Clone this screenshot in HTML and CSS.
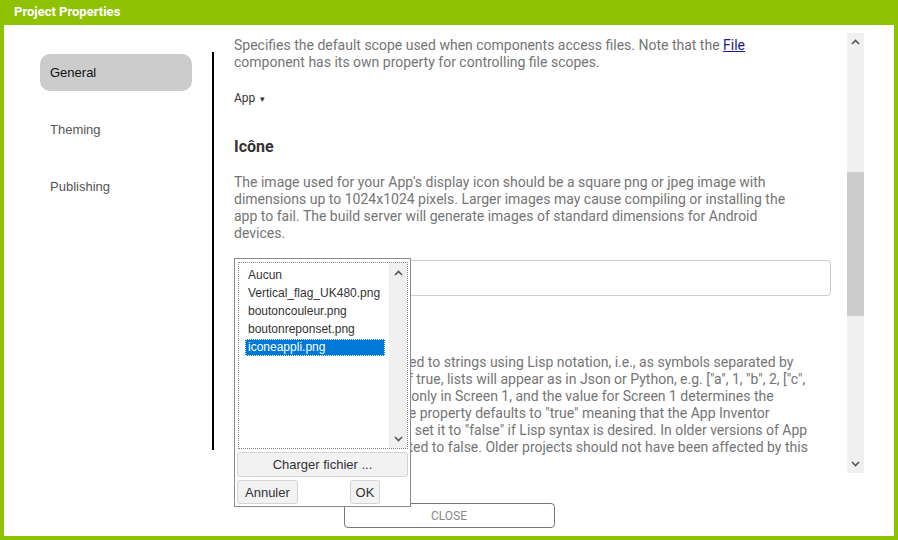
FILE: index.html
```
<!DOCTYPE html>
<html lang="fr">
<head>
  <meta charset="UTF-8">
  <title>Project Properties</title>
  <link rel="stylesheet" href="styles.css">
</head>
<body>

  <div class="dialog">
    <div class="dialog-title">Project Properties</div>

    <div class="dialog-body">
      <div class="main-row">
        <div class="nav">
          <div class="nav-item selected">General</div>
          <div class="nav-item">Theming</div>
          <div class="nav-item">Publishing</div>
        </div>

        <div class="scroll-view">
          <p class="desc first">Specifies the default scope used when components access files. Note that the <a href="#">File</a> component has its own property for controlling file scopes.</p>
          <div class="choice">App <span class="caret">▾</span></div>

          <h3 class="prop-name">Icône</h3>
          <p class="desc">The image used for your App's display icon should be a square png or jpeg image with dimensions up to 1024x1024 pixels. Larger images may cause compiling or installing the app to fail. The build server will generate images of standard dimensions for Android devices.</p>
          <div class="text-box"></div>

          <h3 class="prop-name second">ShowListsAsJson</h3>
          <p class="desc lines">If false,&nbsp;&nbsp; lists will be converted to strings using Lisp notation, i.e., as symbols separated by<br>
spaces, e.g., (a 1 b2 (c d)).&nbsp; If true, lists will appear as in Json or Python, e.g. ["a", 1, "b", 2, ["c",<br>
"d"]].&nbsp;&nbsp; This property appears only in Screen 1, and the value for Screen 1 determines the<br>
behavior for all screens.&nbsp;&nbsp; The property defaults to "true" meaning that the App Inventor<br>
programmer must explicitly&nbsp;&nbsp; set it to "false" if Lisp syntax is desired. In older versions of App<br>
Inventor,&nbsp;&nbsp; this setting defaulted to false. Older projects should not have been affected by this<br>
default settings update.</p>
        </div>

        <div class="scrollbar">
          <svg class="arrow" width="9" height="6" viewBox="0 0 9 6"><path d="M1 5 L4.5 1.5 L8 5" fill="none" stroke="#555" stroke-width="1.6"/></svg>
          <div class="thumb"></div>
          <svg class="arrow bottom" width="9" height="6" viewBox="0 0 9 6"><path d="M1 1 L4.5 4.5 L8 1" fill="none" stroke="#555" stroke-width="1.6"/></svg>
        </div>
      </div>

      <div class="footer">
        <button class="close-btn">CLOSE</button>
      </div>

      <!-- liste d'images ouverte par dessus le champ Icône -->
      <div class="picker">
        <div class="list-box">
          <div class="list-items">
            <div class="list-item">Aucun</div>
            <div class="list-item">Vertical_flag_UK480.png</div>
            <div class="list-item">boutoncouleur.png</div>
            <div class="list-item">boutonreponset.png</div>
            <div class="list-item active">iconeappli.png</div>
          </div>
          <div class="list-scroll">
            <svg width="9" height="6" viewBox="0 0 9 6"><path d="M1 5 L4.5 1.5 L8 5" fill="none" stroke="#555" stroke-width="1.6"/></svg>
            <svg width="9" height="6" viewBox="0 0 9 6"><path d="M1 1 L4.5 4.5 L8 1" fill="none" stroke="#555" stroke-width="1.6"/></svg>
          </div>
        </div>
        <button class="picker-btn upload">Charger fichier ...</button>
        <div class="picker-row">
          <button class="picker-btn cancel">Annuler</button>
          <div class="ok-cell"><button class="picker-btn">OK</button></div>
        </div>
      </div>
    </div>
  </div>

</body>
</html>
```

FILE: styles.css
```
body {
  margin: 0;
  font-family: Roboto, 'Liberation Sans', sans-serif;
}

.dialog {
  width: 898px;
  height: 540px;
  box-sizing: border-box;
  background: #8fc202;
  padding: 0 4px 4px 4px;
  display: flex;
  flex-direction: column;
}

.dialog-title {
  height: 25px;
  line-height: 24px;
  padding-left: 10px;
  color: white;
  font-weight: bold;
  font-size: 13px;
}

.dialog-body {
  position: relative;
  flex: 1;
  background: white;
  display: flex;
  flex-direction: column;
}

.main-row {
  display: flex;
  align-items: flex-start;
  margin-top: 8px;
  height: 440px;
}

/* colonne de gauche */
.nav {
  width: 210px;
  height: 398px;
  margin-top: 19px;
  padding-top: 2px;
  padding-left: 36px;
  box-sizing: border-box;
  border-right: 2px solid #000;
  flex-shrink: 0;
  font-family: 'Liberation Sans', sans-serif;
  font-size: 13px;
}

.nav-item {
  width: 152px;
  height: 37px;
  line-height: 37px;
  padding-left: 10px;
  box-sizing: border-box;
  margin-bottom: 20px;
  color: #555;
  border-radius: 10px;
}

.nav-item.selected {
  background: #cccccc;
  color: #111;
}

.scroll-view {
  width: 625px;
  height: 424px;
  margin-left: 8px;
  padding: 4px 16px 0 12px;
  box-sizing: border-box;
  overflow: hidden;
  flex-shrink: 0;
}

.desc {
  margin: 0;
  width: 568px;
  font-size: 14px;
  line-height: 17px;
  color: #757575;
}

.desc a {
  color: #1a1a8c;
}

.desc.lines {
  white-space: nowrap;
  margin-top: 17px;
}

.choice {
  margin-top: 19px;
  font-size: 12px;
  line-height: 16px;
  color: #333;
}

.caret {
  font-size: 9px;
  margin-left: 2px;
}

.prop-name {
  margin: 30px 0 17px 0;
  font-size: 16px;
  line-height: 20px;
  color: #333;
}

.prop-name.second {
  margin: 21px 0 0 0;
}

.text-box {
  margin-top: 18px;
  width: 597px;
  height: 36px;
  box-sizing: border-box;
  border: 1px solid #ccc;
  border-radius: 4px;
}

.scrollbar {
  width: 17px;
  height: 440px;
  background: #f0f0f0;
  position: relative;
  flex-shrink: 0;
}

.scrollbar .arrow {
  display: block;
  margin: 6px auto 0 auto;
}

.scrollbar .arrow.bottom {
  position: absolute;
  left: 4px;
  bottom: 6px;
  margin: 0;
}

.scrollbar .thumb {
  margin-top: 127px;
  height: 144px;
  background: #cdcdcd;
}

.footer {
  display: flex;
  justify-content: center;
  margin-top: 30px;
}

.close-btn {
  width: 211px;
  height: 25px;
  background: white;
  border: 1px solid #777;
  border-radius: 4px;
  color: #888;
  font-family: Roboto, sans-serif;
  font-size: 12px;
}

/* fenetre de choix du fichier */
.picker {
  position: absolute;
  left: 230px;
  top: 233px;
  width: 177px;
  height: 249px;
  box-sizing: border-box;
  border: 1px solid #8a8a8a;
  background: white;
  padding: 3px 2px 0 2px;
  font-family: 'Liberation Sans', sans-serif;
  font-size: 12px;
  color: #333;
}

.list-box {
  display: flex;
  margin-left: 1px;
  width: 170px;
  height: 187px;
  box-sizing: border-box;
  border: 1px dotted #888;
}

.list-items {
  flex: 1;
  padding: 3px 4px 0 6px;
}

.list-item {
  height: 18px;
  line-height: 18px;
  padding-left: 3px;
  white-space: nowrap;
}

.list-item.active {
  background: #0078d7;
  color: white;
  outline: 1px dotted #fff;
  outline-offset: -1px;
  height: 17px;
  line-height: 17px;
  margin-top: 1px;
}

.list-scroll {
  width: 18px;
  background: #f0f0f0;
  display: flex;
  flex-direction: column;
  justify-content: space-between;
  align-items: center;
  padding: 7px 0 6px 0;
}

.picker-btn {
  height: 24px;
  background: #f2f2f2;
  border: 1px solid #d4d4d4;
  border-radius: 3px;
  font-family: 'Liberation Sans', sans-serif;
  font-size: 13px;
  color: #333;
  padding: 0 5px;
}

.picker-btn.cancel {
  padding: 0 7px;
}

.picker-btn.upload {
  display: block;
  width: 171px;
  height: 25px;
  margin-top: 3px;
}

.picker-row {
  display: grid;
  grid-template-columns: 85px 1fr;
  justify-items: start;
  margin-top: 3px;
}

.ok-cell {
  justify-self: center;
}
```
